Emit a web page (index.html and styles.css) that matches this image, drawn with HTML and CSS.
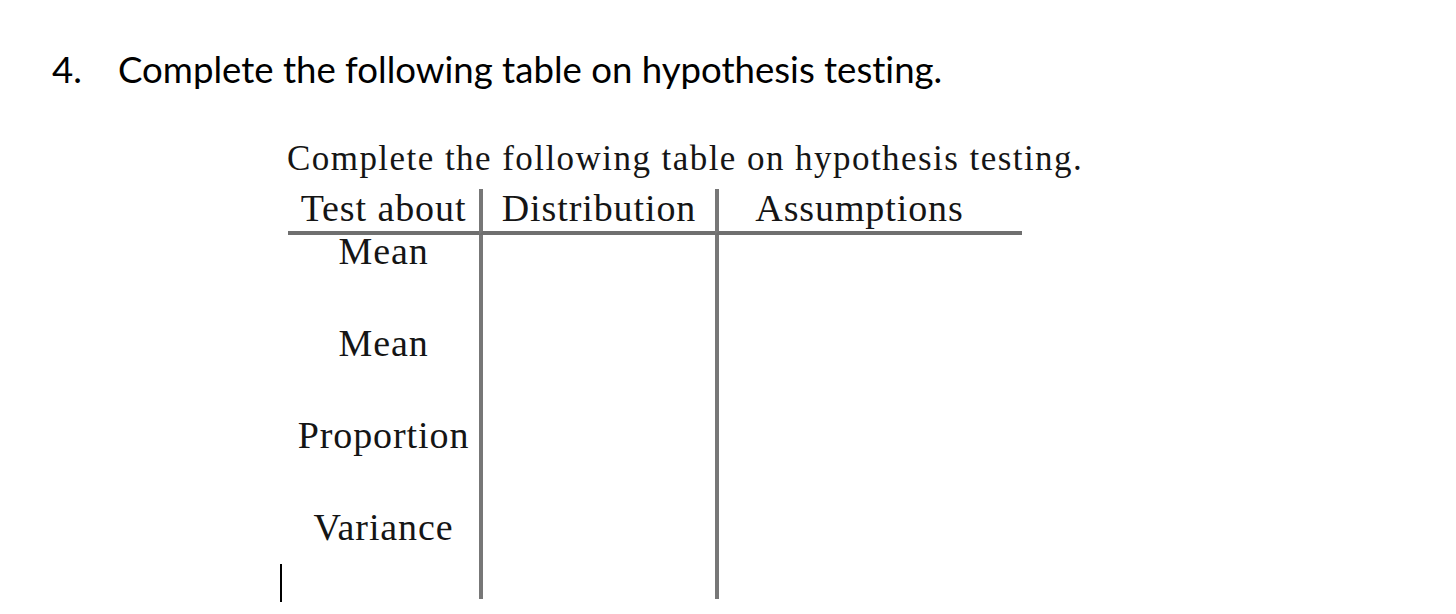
FILE: index.html
```html
<!DOCTYPE html>
<html>
<head>
<meta charset="utf-8">
<link rel="stylesheet" href="styles.css">
</head>
<body>
<div class="page">
  <h1 class="question"><span class="num">4.</span><span class="qtext">Complete the following table on hypothesis testing.</span></h1>
  <div class="figure">
    <div class="caption">Complete the following table on hypothesis testing.</div>
    <div class="grid">
      <div class="cell head c1">Test about</div>
      <div class="cell head c2">Distribution</div>
      <div class="cell head c3">Assumptions</div>
      <div class="cell body c1">Mean</div>
      <div class="cell body c2"></div>
      <div class="cell body c3"></div>
      <div class="cell body c1">Mean</div>
      <div class="cell body c2"></div>
      <div class="cell body c3"></div>
      <div class="cell body c1">Proportion</div>
      <div class="cell body c2"></div>
      <div class="cell body c3"></div>
      <div class="cell body c1 last">Variance</div>
      <div class="cell body c2 last"></div>
      <div class="cell body c3 last"></div>
    </div>
  </div>
  <span class="cursor"></span>
</div>
</body>
</html>
```
FILE: styles.css
```css
html, body {
  margin: 0;
  padding: 0;
  background: #ffffff;
}
.page {
  width: 1456px;
  height: 614px;
  overflow: hidden;
  position: relative;
}
.question {
  margin: 0;
  padding: 47px 0 0 52px;
  font-family: Lato, "Open Sans", sans-serif;
  font-weight: 400;
  font-size: 36.6px;
  line-height: 44px;
  color: #000;
  display: flex;
  font-variant-ligatures: none;
}
.num {
  width: 66px;
}
.figure {
  margin: 48px 0 0 287px;
  font-family: "Liberation Serif", serif;
  color: #151515;
}
.caption {
  font-size: 35px;
  line-height: 40px;
  letter-spacing: 1.45px;
  margin-bottom: 10px;
}
.grid {
  display: grid;
  grid-template-columns: 191px 236px 307px;
  margin-left: 1px;
}
.cell {
  font-size: 38px;
  letter-spacing: 0.9px;
  text-align: center;
}
.head {
  height: 42px;
  line-height: 38px;
  border-bottom: 4px solid #6f6f6f;
}
.body {
  height: 92px;
  line-height: 32px;
}
.last {
  height: 88px;
}
.c2, .c3 {
  border-left: 4px solid #777;
}
.head.c3 {
  padding-right: 22px;
}
.cursor {
  position: absolute;
  left: 280px;
  top: 564px;
  width: 2px;
  height: 38px;
  background: #000;
}
```
